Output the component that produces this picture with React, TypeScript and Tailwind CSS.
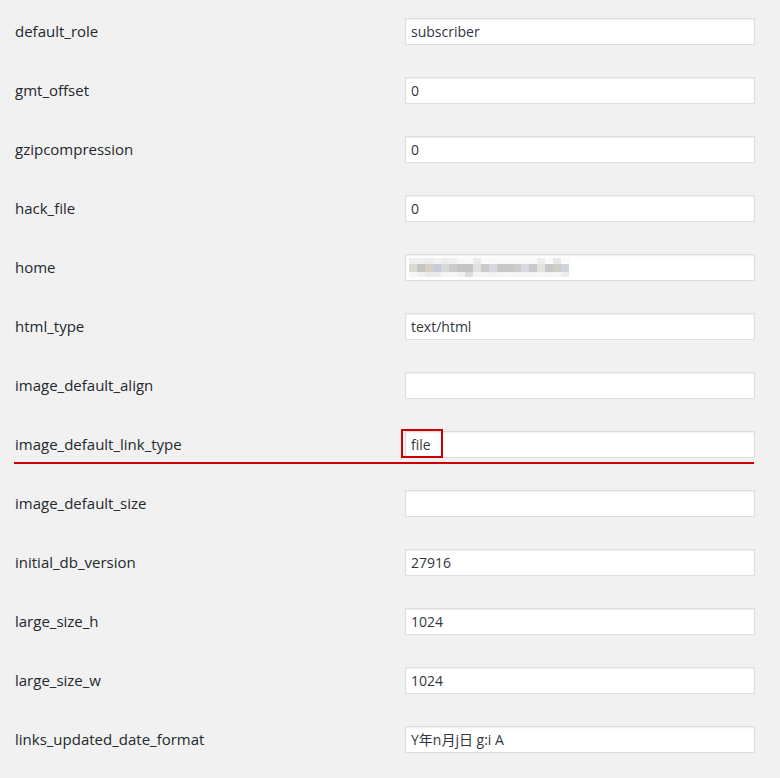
import React from "react";

const rows: { label: string; value: string; kind?: "blur" | "mark" }[] = [
  { label: "default_role", value: "subscriber" },
  { label: "gmt_offset", value: "0" },
  { label: "gzipcompression", value: "0" },
  { label: "hack_file", value: "0" },
  { label: "home", value: "", kind: "blur" },
  { label: "html_type", value: "text/html" },
  { label: "image_default_align", value: "" },
  { label: "image_default_link_type", value: "file", kind: "mark" },
  { label: "image_default_size", value: "" },
  { label: "initial_db_version", value: "27916" },
  { label: "large_size_h", value: "1024" },
  { label: "large_size_w", value: "1024" },
  { label: "links_updated_date_format", value: "Y年n月j日 g:i A" },
];

const topRow = [
  "bg-[#f0eeec]", "bg-[#eeeeee]", "bg-[#ecebea]", "bg-[#f2f2f4]", "bg-[#ececec]",
  "bg-[#f0f0f0]", "bg-[#f6f6f6]", "bg-[#fafafa]", "bg-[#eaecea]", "bg-[#fafafa]",
  "bg-[#f8f8f8]", "bg-[#fafafa]", "bg-[#fafafa]", "bg-[#fafafa]", "bg-[#fafafa]",
  "bg-[#fafafa]", "bg-[#ececea]", "bg-[#fafafa]", "bg-[#e8e8e8]", "bg-[#fafafa]",
];
const midRow = [
  "bg-[#dcd8d4]", "bg-[#c4c4c0]", "bg-[#d8d0c8]", "bg-[#c8ccd8]", "bg-[#d8d8d8]",
  "bg-[#cccccc]", "bg-[#c8c4c4]", "bg-[#c4c4c4]", "bg-[#e0e4e0]", "bg-[#ccc8cc]",
  "bg-[#d8d8e0]", "bg-[#c8c4c8]", "bg-[#c8c8c8]", "bg-[#cccccc]", "bg-[#d8d8e0]",
  "bg-[#c8c8cc]", "bg-[#e4e4e0]", "bg-[#c8c8c8]", "bg-[#d0ccc8]", "bg-[#d0d4dc]",
];
const botRow = [
  "bg-[#f6f6f6]", "bg-[#f0f0f0]", "bg-[#ece8e4]", "bg-[#e8ecf0]", "bg-[#f4f4f4]",
  "bg-[#f6f6f6]", "bg-[#f0f0f0]", "bg-[#dcdcdc]", "bg-[#f4f4f4]", "bg-[#f4f4f4]",
  "bg-[#f2f2f2]", "bg-[#f4f4f4]", "bg-[#f6f6f6]", "bg-[#f4f4f4]", "bg-[#f4f4f4]",
  "bg-[#f4f4f4]", "bg-[#f6f6f6]", "bg-[#f4f4f4]", "bg-[#f6f6f6]", "bg-[#ececec]",
];

function Blur() {
  return (
    <div className="flex flex-col ml-[-2px]">
      <div className="flex h-[6px]">
        {topRow.map((c, i) => (
          <div key={i} className={`w-[8px] ${c}`} />
        ))}
      </div>
      <div className="flex h-[8px]">
        {midRow.map((c, i) => (
          <div key={i} className={`w-[8px] ${c}`} />
        ))}
      </div>
      <div className="flex h-[5px]">
        {botRow.map((c, i) => (
          <div key={i} className={`w-[8px] ${c}`} />
        ))}
      </div>
    </div>
  );
}

export default function App() {
  return (
    <div
      className="w-[780px] h-[778px] bg-[#f1f1f1] overflow-hidden pt-[18px] flex flex-col gap-[32px]"
      style={{ fontFamily: '"Open Sans", "Noto Sans CJK SC", sans-serif' }}
    >
      {rows.map((r) => (
        <div key={r.label} className="relative flex items-center h-[27px] pl-[15px]">
          <div className="w-[390px] text-[15px] text-[#23282d]">{r.label}</div>
          <div className="w-[350px] h-[27px] bg-white border border-[#dddddd] shadow-[inset_0_1px_2px_rgba(0,0,0,0.07)] flex items-center pl-[5px] text-[14px] text-[#32373c]">
            {r.kind === "blur" ? <Blur /> : r.value}
          </div>
          {r.kind === "mark" && (
            <>
              <div className="absolute left-[401px] top-[-2px] w-[42px] h-[29px] border-2 border-[#cc0000]" />
              <div className="absolute left-[14px] top-[31px] w-[740px] h-[2px] bg-[#cc0000]" />
            </>
          )}
        </div>
      ))}
    </div>
  );
}
